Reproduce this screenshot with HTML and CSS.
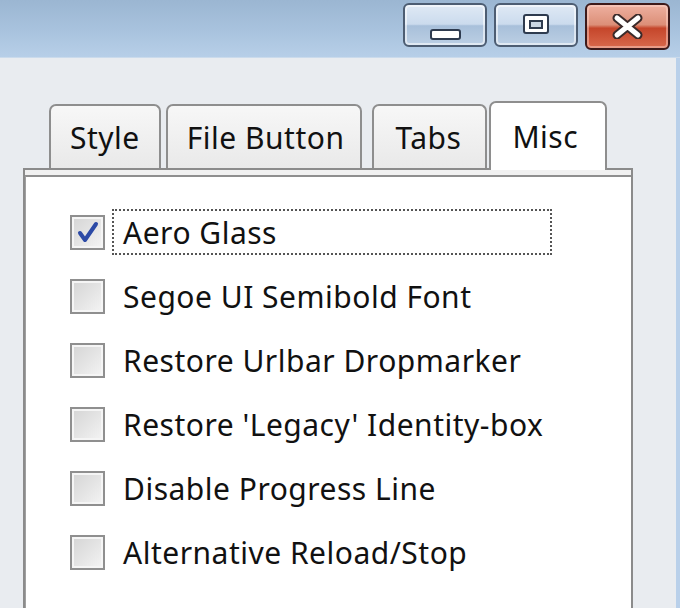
FILE: index.html
```html
<!DOCTYPE html>
<html>
<head>
  <title>Options</title>
  <link rel="stylesheet" href="styles.css">
</head>
<body>
  <div class="window">
    <!-- Titelbalk met vensterknoppen -->
    <div class="titlebar">
      <div class="caption-buttons">
        <div class="cap-btn"><span class="glyph-min"></span></div>
        <div class="cap-btn"><span class="glyph-max"></span></div>
        <div class="cap-btn close">
          <svg width="31" height="25" viewBox="0 0 31 25">
            <path d="M5 4 L26 21 M26 4 L5 21" stroke="#3a2a2a" stroke-width="9" stroke-linecap="round"/>
            <path d="M5 4 L26 21 M26 4 L5 21" stroke="#ffffff" stroke-width="5" stroke-linecap="round"/>
          </svg>
        </div>
      </div>
    </div>

    <!-- Inhoud van het venster -->
    <div class="client">
      <div class="tabs">
        <div class="tab">Style</div>
        <div class="tab tab-file">File Button</div>
        <div class="tab tab-tabs">Tabs</div>
        <div class="tab selected">Misc</div>
      </div>

      <div class="panel">
        <div class="panel-body">
          <ul class="options">
            <li class="option">
              <span class="checkbox">
                <svg width="27" height="27" viewBox="0 0 27 27">
                  <path d="M6 14 L11 21 L22 5" fill="none" stroke="#2c4aa6" stroke-width="4" stroke-linecap="round" stroke-linejoin="round"/>
                </svg>
              </span>
              <span class="label focus">Aero Glass</span>
            </li>
            <li class="option">
              <span class="checkbox"></span>
              <span class="label">Segoe UI Semibold Font</span>
            </li>
            <li class="option">
              <span class="checkbox"></span>
              <span class="label">Restore Urlbar Dropmarker</span>
            </li>
            <li class="option">
              <span class="checkbox"></span>
              <span class="label">Restore 'Legacy' Identity-box</span>
            </li>
            <li class="option">
              <span class="checkbox"></span>
              <span class="label">Disable Progress Line</span>
            </li>
            <li class="option">
              <span class="checkbox"></span>
              <span class="label">Alternative Reload/Stop</span>
            </li>
          </ul>
        </div>
      </div>
    </div>
  </div>
</body>
</html>
```

FILE: styles.css
```css
/* Basis: geen marge, systeemachtig lettertype */
body {
  margin: 0;
  background-color: #e9ecf0;
  font-family: "Noto Sans", "DejaVu Sans", sans-serif;
  letter-spacing: 0.5px;
  color: #111;
  overflow: hidden;
}

.window {
  width: 680px;
  height: 608px;
  display: flex;
  flex-direction: column;
}

/* Titelbalk: blauwe Aero-gradient */
.titlebar {
  height: 57px;
  flex: none;
  background: linear-gradient(#9bb6d2, #a9c3de 55%, #b7cfe8);
  border-bottom: 1px solid #cbdbec;
  display: flex;
  justify-content: flex-end;
  align-items: flex-start;
  padding-right: 10px;
}

.caption-buttons {
  display: flex;
  gap: 7px;
  margin-top: 3px;
}

.cap-btn {
  width: 80px;
  height: 40px;
  border: 2px solid #4d5d72;
  border-radius: 6px;
  background: linear-gradient(#dfe9f5, #cbdbed 48%, #a8c0da 52%, #bccfe4);
  box-shadow: inset 0 0 0 2px rgba(255, 255, 255, 0.55);
  display: flex;
  justify-content: center;
  align-items: center;
}

.cap-btn.close {
  width: 81px;
  height: 43px;
  border-color: #3d1a1a;
  background: linear-gradient(#eeb0a0, #dc8f78 46%, #c5462b 54%, #d9694c);
  box-shadow: inset 0 0 0 2px rgba(255, 220, 210, 0.45);
}

.glyph-min {
  width: 27px;
  height: 7px;
  margin-top: 18px;
  border: 2px solid #2e3b4f;
  border-radius: 3px;
  background: #fff;
}

.glyph-max {
  position: relative;
  width: 22px;
  height: 16px;
  margin-top: -2px;
  border: 2px solid #2e3b4f;
  border-radius: 3px;
  background: #fff;
}

.glyph-max::after {
  content: "";
  position: absolute;
  left: 4px;
  top: 4px;
  width: 10px;
  height: 5px;
  border: 2px solid #2e3b4f;
  background: #c9d6e4;
}

/* Client-gebied met de tabbladen */
.client {
  flex: 1;
  padding-left: 23px;
  border-right: 4px solid #b9d0ea;
}

.tabs {
  display: flex;
  align-items: flex-end;
  height: 66px;
  margin-top: 44px;
  padding-left: 26px;
}

.tab {
  height: 62px;
  padding: 0 19px;
  border: 2px solid #8e8e8e;
  border-bottom: none;
  border-radius: 7px 7px 0 0;
  background: linear-gradient(#f7f7f7, #e9e9e9);
  font-size: 30px;
  white-space: nowrap;
  display: flex;
  align-items: center;
  margin-right: 5px;
}

.tab-file {
  padding-right: 16px;
  margin-right: 10px;
}

.tab-tabs {
  padding: 0 24px 0 21px;
}

.tab.selected {
  height: 67px;
  margin: 0 0 -2px -3px;
  padding: 0 27px 0 21px;
  background: #fff;
  position: relative;
  z-index: 1;
}

/* Paneel onder de tabbladen */
.panel {
  width: 606px;
  height: 460px;
  border: 2px solid #8b8b8b;
  border-bottom: none;
  padding-top: 5px;
  background: #f1f1f1;
}

.panel-body {
  height: 100%;
  border-top: 2px solid #8f8f8f;
  border-left: 1px solid #a0a0a0;
  background: #fff;
}

.options {
  list-style: none;
  margin: 0;
  padding: 23px 0 0 44px;
}

.option {
  display: flex;
  align-items: center;
  height: 64px;
}

/* Selectievakje in Windows 7-stijl */
.checkbox {
  width: 31px;
  height: 31px;
  border: 2px solid #8f8f8f;
  background: linear-gradient(135deg, #d4d4d4, #f4f4f4);
  box-shadow: inset 0 0 0 2px #f5f5f5;
  flex: none;
  display: flex;
  align-items: center;
  justify-content: center;
}

.label {
  margin-left: 7px;
  width: 418px;
  height: 42px;
  padding: 0 9px;
  border: 2px dotted transparent;
  font-size: 30px;
  white-space: nowrap;
  display: flex;
  align-items: center;
}

.label.focus {
  border-color: #555;
}
```
